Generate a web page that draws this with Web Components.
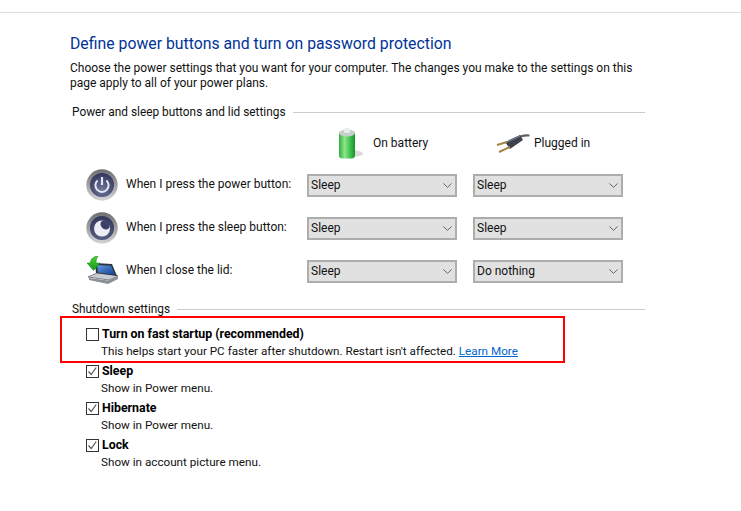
<!DOCTYPE html>
<html lang="en">
<head>
<meta charset="utf-8">
<title>Power buttons</title>
<style>
    html, body { margin: 0; background: #fff; }
    body { font: 12px Roboto, sans-serif; color: #000; }
</style>
</head>
<body>
<power-page></power-page>

<script>
const ICONS = {
    power: `<svg width="32" height="32" viewBox="0 0 32 32">
        <defs>
            <linearGradient id="r" x1="0" y1="0" x2="0" y2="1"><stop offset="0" stop-color="#6d6d70"/><stop offset="1" stop-color="#d5d5d8"/></linearGradient>
            <radialGradient id="f" cx=".5" cy=".7" r=".7"><stop offset="0" stop-color="#70789c"/><stop offset="1" stop-color="#30345a"/></radialGradient>
        </defs>
        <circle cx="16" cy="16" r="15.700" fill="url(#r)"/>
        <circle cx="16" cy="16" r="12" fill="url(#f)"/>
        <path d="M11.600 11.400a6.600 6.600 0 1 0 8.800 0" fill="none" stroke="#e4e6ee" stroke-width="2"/>
        <path d="M16 8v8" stroke="#e4e6ee" stroke-width="2.200"/>
    </svg>`,
    sleep: `<svg width="32" height="32" viewBox="0 0 32 32">
        <defs>
            <linearGradient id="r" x1="0" y1="0" x2="0" y2="1"><stop offset="0" stop-color="#6d6d70"/><stop offset="1" stop-color="#d5d5d8"/></linearGradient>
            <radialGradient id="f" cx=".5" cy=".7" r=".7"><stop offset="0" stop-color="#666e92"/><stop offset="1" stop-color="#30345a"/></radialGradient>
        </defs>
        <circle cx="16" cy="16" r="15.700" fill="url(#r)"/>
        <circle cx="16" cy="16" r="12" fill="url(#f)"/>
        <circle cx="16" cy="16.500" r="8" fill="#eceef4"/>
        <ellipse cx="19" cy="13" rx="5" ry="4" fill="#3d4168" transform="rotate(45 19 13)"/>
    </svg>`,
    lid: `<svg width="33" height="30" viewBox="0 0 33 30">
        <defs>
            <linearGradient id="s" x1="0" y1="0" x2="1" y2="1"><stop offset="0" stop-color="#5f9be0"/><stop offset="1" stop-color="#123e94"/></linearGradient>
            <linearGradient id="g" x1="0" y1="0" x2="0" y2="1"><stop offset="0" stop-color="#4fd030"/><stop offset="1" stop-color="#149a1a"/></linearGradient>
        </defs>
        <path d="M2 21l21 3 9-4-3-1-18-2z" fill="#c9ccd2" stroke="#66696f" stroke-width=".8"/>
        <path d="M3 22v2l19 4 10-5v-2.500l-10 4z" fill="#8c9096"/>
        <path d="M9 7l17 1 5 12-21-3z" fill="#30343c"/>
        <path d="M11 9l14 .8 4 9-17-2.300z" fill="url(#s)"/>
        <path d="M12 0C7 .5 4.500 3 4.500 7H1l6.500 7.500L14 7h-4c0-3 .8-5.500 2-7z" fill="url(#g)" stroke="#0d7a15" stroke-width=".5"/>
    </svg>`,
    battery: `<svg width="26" height="31" viewBox="0 0 26 31">
        <defs>
            <linearGradient id="b" x1="0" y1="0" x2="1" y2="0"><stop offset="0" stop-color="#2fae3c"/><stop offset=".35" stop-color="#8ee68c"/><stop offset=".75" stop-color="#36bb46"/><stop offset="1" stop-color="#179029"/></linearGradient>
        </defs>
        <path d="M17 29l8-2-1-3-7-2z" fill="#bbb" opacity=".55"/>
        <rect x="1" y="3" width="16" height="27.500" rx="3.500" fill="url(#b)"/>
        <ellipse cx="9" cy="5" rx="8" ry="3.500" fill="#c6cfc9"/>
        <rect x="6" y="0" width="6" height="5" rx="1.500" fill="#e8ecea"/>
    </svg>`,
    plug: `<svg width="34" height="22" viewBox="0 0 34 22">
        <path d="M22 6C26 3 29 3 33.500 3.500" fill="none" stroke="#5b6068" stroke-width="2.200"/>
        <path d="M9 10l15-7 3 5-13 9z" fill="#3d424e"/>
        <path d="M11 10l13-6" stroke="#7b8190" stroke-width="1.200"/>
        <path d="M1 13l10-3" stroke="#a88544" stroke-width="2"/>
        <path d="M3 20l11-5" stroke="#a88544" stroke-width="2"/>
    </svg>`
};

class PowerIcon extends HTMLElement {
    connectedCallback() {
        this.attachShadow({ mode: 'open' });
        this.shadowRoot.innerHTML = `
            <style>
                :host { display: block; line-height: 0; }
            </style>
            ${ICONS[this.getAttribute('name')]}
        `;
    }
}

class GroupHeader extends HTMLElement {
    connectedCallback() {
        this.attachShadow({ mode: 'open' });
        this.shadowRoot.innerHTML = `
            <style>
                :host {
                    display: flex;
                    align-items: center;
                    gap: 7px;
                    padding-left: 2px;
                    height: 18px;
                    font-size: 11.850px;
                    color: #111;
                }
                i {
                    flex: 1;
                    height: 1px;
                    background: #ccc;
                }
            </style>
            <slot></slot><i></i>
        `;
    }
}

class DropSelect extends HTMLElement {
    connectedCallback() {
        this.attachShadow({ mode: 'open' });
        this.shadowRoot.innerHTML = `
            <style>
                :host {
                    display: flex;
                    align-items: center;
                    justify-content: space-between;
                    box-sizing: border-box;
                    width: 150px;
                    height: 23px;
                    padding: 0 3px 0 2px;
                    background: #e1e1e1;
                    border: 2px solid #adadad;
                    color: #111;
                }
                svg { display: block; }
            </style>
            <slot></slot>
            <svg width="9" height="5" viewBox="0 0 9 5"><path d="M.4.400l4.100 4 4.100-4" fill="none" stroke="#666" stroke-width="1"/></svg>
        `;
    }
}

class ButtonRow extends HTMLElement {
    connectedCallback() {
        this.attachShadow({ mode: 'open' });
        const icon = this.getAttribute('icon');
        this.shadowRoot.innerHTML = `
            <style>
                :host {
                    display: grid;
                    grid-template-columns: 40px 181px 150px 166px;
                    align-items: center;
                    height: 43px;
                    color: #111;
                }
                power-icon { margin-top: -2px; }
                .label { margin-bottom: 2px; }
                ::slotted([slot="b"]) { margin-left: 16px; }
            </style>
            <power-icon name="${icon}"></power-icon>
            <div class="label"><slot name="label"></slot></div>
            <slot name="a"></slot>
            <slot name="b"></slot>
        `;
    }
}

class CheckItem extends HTMLElement {
    connectedCallback() {
        this.attachShadow({ mode: 'open' });
        const checked = this.hasAttribute('checked');
        this.shadowRoot.innerHTML = `
            <style>
                :host {
                    display: grid;
                    grid-template-columns: 13px 1fr;
                    grid-template-rows: 17px 20px;
                    column-gap: 3px;
                    height: 37px;
                    color: #111;
                }
                .box {
                    box-sizing: border-box;
                    width: 13px;
                    height: 13px;
                    margin-top: 3px;
                    border: 1px solid #333;
                    background: #fff;
                }
                svg { display: block; }
                .title {
                    font-size: 12.350px;
                    font-weight: 700;
                    line-height: 18px;
                    color: #000;
                }
                .sub {
                    grid-column: 2;
                    margin-left: -1px;
                    font-size: 11.700px;
                    line-height: 18px;
                }
            </style>
            <div class="box">${checked ? '<svg width="11" height="11" viewBox="0 0 11 11"><path d="M1.500 5.500l2.700 3 5-7" fill="none" stroke="#555" stroke-width="1.200"/></svg>' : ''}</div>
            <div class="title"><slot name="title"></slot></div>
            <div class="sub"><slot></slot></div>
        `;
    }
}

class PowerPage extends HTMLElement {
    connectedCallback() {
        this.attachShadow({ mode: 'open' });
        this.shadowRoot.innerHTML = `
            <style>
                :host {
                    display: block;
                    height: 511px;
                    padding-top: 12px;
                    box-sizing: border-box;
                    font: 12px/15px Roboto, sans-serif;
                }
                .top { height: 1px; background: #e0e0e0; }
                main {
                    width: 575px;
                    margin-left: 70px;
                    padding-top: 20px;
                }
                h1 {
                    margin: 0;
                    font-size: 15.800px;
                    font-weight: 400;
                    line-height: 22px;
                    color: #003399;
                }
                p { margin: 6px 0 0; color: #111; }
                group-header { margin-top: 12px; }
                .heads {
                    display: grid;
                    grid-template-columns: 166px 166px;
                    margin: 2px 0 0 266px;
                    height: 40px;
                    color: #111;
                }
                .heads div { display: flex; align-items: center; }
                .heads .bat { gap: 9px; margin-left: 2px; }
                .heads .plg { gap: 4px; margin-left: -6px; }
                .rows { padding-left: 16px; margin-top: 1px; }
                .shutdown { margin-top: 7px; }
                .checks {
                    position: relative;
                    padding-left: 16px;
                    margin-top: 7px;
                }
                .mark {
                    position: absolute;
                    left: -10px;
                    top: -9px;
                    width: 501px;
                    height: 43px;
                    border: 2px solid #f00;
                }
                a { color: #0066cc; text-decoration: underline; }
            </style>
            <div class="top"></div>
            <main>
                <h1>Define power buttons and turn on password protection</h1>
                <p>Choose the power settings that you want for your computer. The changes you make to the settings on this page apply to all of your power plans.</p>

                <group-header>Power and sleep buttons and lid settings</group-header>
                <div class="heads">
                    <div class="bat"><power-icon name="battery"></power-icon>On battery</div>
                    <div class="plg"><power-icon name="plug"></power-icon>Plugged in</div>
                </div>
                <div class="rows">
                    <button-row icon="power">
                        <span slot="label">When I press the power button:</span>
                        <drop-select slot="a">Sleep</drop-select>
                        <drop-select slot="b">Sleep</drop-select>
                    </button-row>
                    <button-row icon="sleep">
                        <span slot="label">When I press the sleep button:</span>
                        <drop-select slot="a">Sleep</drop-select>
                        <drop-select slot="b">Sleep</drop-select>
                    </button-row>
                    <button-row icon="lid">
                        <span slot="label">When I close the lid:</span>
                        <drop-select slot="a">Sleep</drop-select>
                        <drop-select slot="b">Do nothing</drop-select>
                    </button-row>
                </div>

                <group-header class="shutdown">Shutdown settings</group-header>
                <div class="checks">
                    <div class="mark"></div>
                    <check-item>
                        <span slot="title">Turn on fast startup (recommended)</span>
                        This helps start your PC faster after shutdown. Restart isn't affected. <a href="#">Learn More</a>
                    </check-item>
                    <check-item checked>
                        <span slot="title">Sleep</span>
                        Show in Power menu.
                    </check-item>
                    <check-item checked>
                        <span slot="title">Hibernate</span>
                        Show in Power menu.
                    </check-item>
                    <check-item checked>
                        <span slot="title">Lock</span>
                        Show in account picture menu.
                    </check-item>
                </div>
            </main>
        `;
    }
}

customElements.define('power-icon', PowerIcon);
customElements.define('group-header', GroupHeader);
customElements.define('drop-select', DropSelect);
customElements.define('button-row', ButtonRow);
customElements.define('check-item', CheckItem);
customElements.define('power-page', PowerPage);
</script>
</body>
</html>
